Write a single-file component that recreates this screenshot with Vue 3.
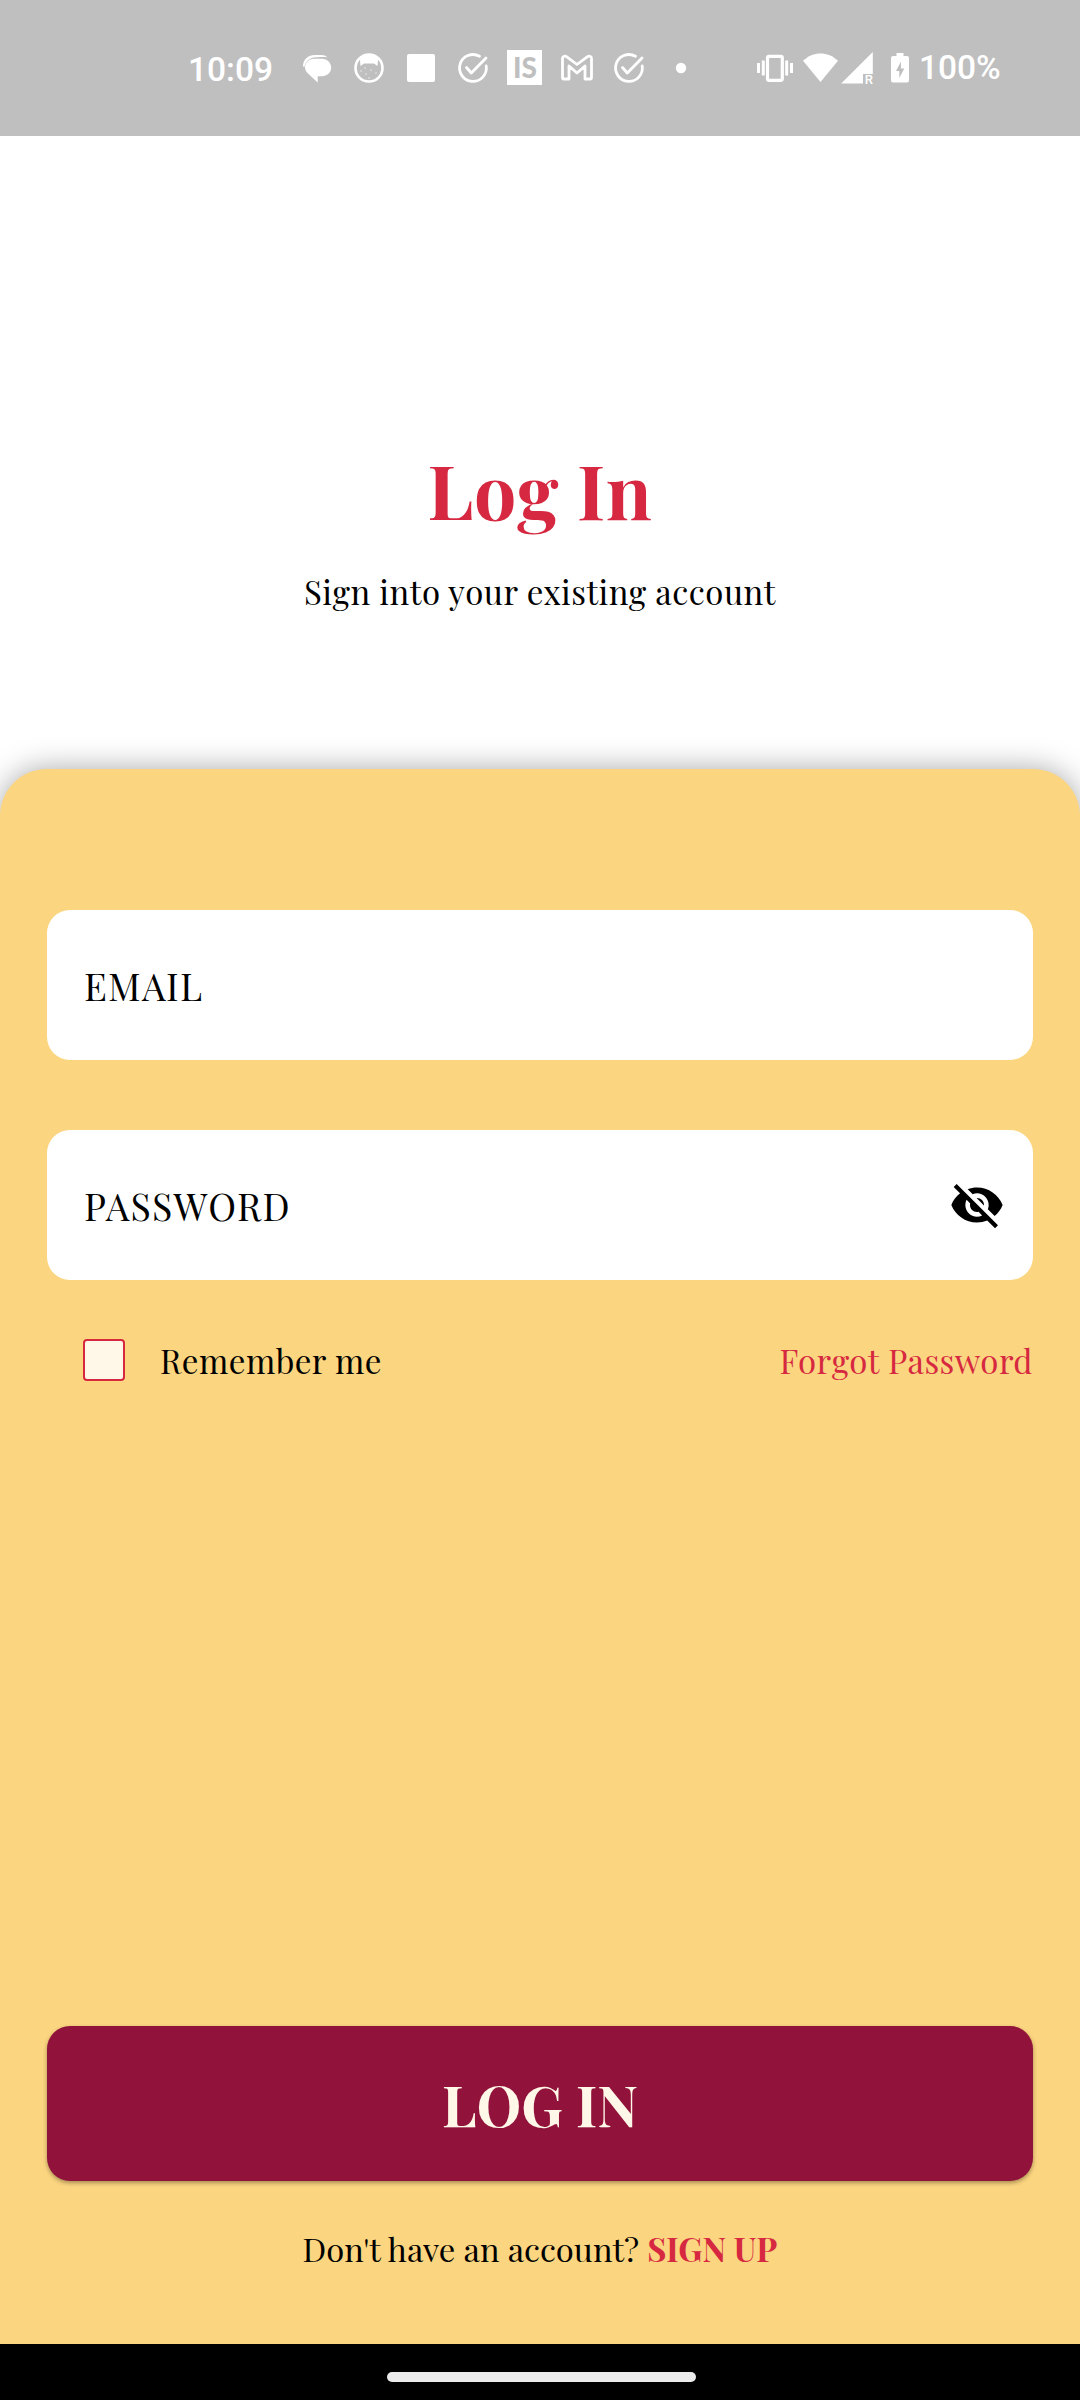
<script setup>
import { ref } from 'vue'

const checks = [473, 629]
const fields = [
  { id: 'email', label: 'EMAIL', secret: false },
  { id: 'password', label: 'PASSWORD', secret: true },
]
const remember = ref(false)
</script>

<template>
  <div class="screen">
    <header class="status">
      <span class="time">10:09</span>
      <svg class="notifications" width="390" height="50" viewBox="300 43 390 50">
        <g fill="#fff">
          <path d="M303 66.500c0-7 5-11.500 12-11.500h6c3 0 5 .8 6.500 2.500C325 56.700 322 57 316 57.200c-6 .5-10.500 3.500-11.600 9.800z" />
          <path d="M314 58.700h8c5 0 9.200 4 9.200 8.800 0 4.900-4.200 8.700-9.200 8.700h-4.300v6.300l-9.200-8.500c-2.100-1.800-3.500-4-3.500-6.500 0-4.900 4-8.800 9-8.800z" />
          <rect x="407" y="54" width="28" height="28" rx="2" />
          <rect x="507" y="50" width="35" height="35" />
          <circle cx="681" cy="68" r="5.200" />
        </g>
        <circle cx="369" cy="68" r="13.500" fill="none" stroke="#fff" stroke-width="2.600" />
        <path d="M360 60c1-4 5-5.500 9-5.500s8 1.500 9 5.500l-.5 6-3.500-2.500h-10l-3.500 2.500z" fill="#fff" />
        <g fill="#fff" opacity=".4">
          <circle cx="361" cy="71" r="1" /><circle cx="366" cy="74" r="1" />
          <circle cx="371" cy="70" r="1" /><circle cx="376" cy="73" r="1" />
          <circle cx="369" cy="78" r="1" /><circle cx="365" cy="68" r="1" />
        </g>
        <g v-for="x in checks" :key="x" :transform="`translate(${x} 68)`" fill="none" stroke="#fff" stroke-width="2.800" stroke-linecap="round" stroke-linejoin="round">
          <path d="M6.500-11.700A13.400 13.400 0 1 0 13.200-2" />
          <path d="M-6.500-.5l4.800 5.500L13-10" />
        </g>
        <text x="513" y="78" class="is" fill="#bfbfbf">IS</text>
        <path d="M562.500 57.500v20q0 1.500 1.500 1.500h5v-13l8 7 8-7v13h5q1.500 0 1.500-1.500v-19c0-2.500-2.500-3-4-1.800L577 64.500l-10.500-7.800c-1.500-1.200-4-.5-4 2" fill="none" stroke="#fff" stroke-width="2.800" stroke-linejoin="round" />
      </svg>
      <svg class="system" width="162" height="50" viewBox="750 43 162 50">
        <g fill="#fff">
          <path d="M757 63h3v10h-3zM761.800 60.500h3v15h-3zM785.200 60.500h3v15h-3zM790 63h3v10h-3z" />
          <path d="M803 60.800C813 51 828 51 838 60.800L820.500 82z" />
          <path d="M872.800 52v22H863v9.500h-21.800z" />
          <path d="M896.500 53h7v3h3.500q2 0 2 2v22.500q0 2-2 2h-14q-2 0-2-2V58q0-2 2-2h3.500z" />
        </g>
        <rect x="767.500" y="56.300" width="14.800" height="24" rx="1.500" fill="none" stroke="#fff" stroke-width="3.200" />
        <path d="M901 61.500l-5 9.500h3.300v7l5-9.500H901z" fill="#bfbfbf" />
        <text x="864.800" y="83.500" class="roaming" fill="#fff">R</text>
      </svg>
      <span class="battery">100%</span>
    </header>

    <section class="hero">
      <h1>Log In</h1>
      <p>Sign into your existing account</p>
    </section>

    <main class="card">
      <div v-for="f in fields" :key="f.id" class="field">
        <span class="label">{{ f.label }}</span>
        <svg v-if="f.secret" width="56" height="56" viewBox="0 0 24 24">
          <path d="M12 7c2.760 0 5 2.240 5 5 0 .65-.13 1.260-.36 1.830l2.920 2.920c1.510-1.260 2.700-2.890 3.430-4.750-1.730-4.390-6-7.500-11-7.500-1.400 0-2.740.25-3.980.7l2.160 2.160C10.740 7.130 11.350 7 12 7zM2 4.270l2.280 2.280.46.460C3.080 8.300 1.780 10.020 1 12c1.730 4.390 6 7.500 11 7.500 1.550 0 3.030-.3 4.380-.84l.42.42L19.730 22 21 20.730 3.270 3 2 4.270zM7.530 9.800l1.550 1.550c-.05.21-.08.43-.08.65 0 1.660 1.340 3 3 3 .22 0 .44-.03.65-.08l1.550 1.550c-.67.33-1.410.53-2.200.53-2.760 0-5-2.240-5-5 0-.79.2-1.530.53-2.200zm4.310-.78l3.150 3.150.02-.16c0-1.660-1.340-3-3-3l-.17.01z" />
        </svg>
      </div>

      <div class="options">
        <span class="box" role="checkbox" :aria-checked="remember" @click="remember = !remember"></span>
        <span class="remember">Remember me</span>
        <a class="forgot">Forgot Password</a>
      </div>

      <button class="login" type="button">LOG IN</button>

      <p class="signup"><span>Don't have an account?</span><a>SIGN UP</a></p>
    </main>

    <footer class="nav"><span class="handle"></span></footer>
  </div>
</template>

<style>
body {
  background: #fff;
}
</style>

<style scoped>
.screen {
  width: 1080px;
  height: 2400px;
  display: flex;
  flex-direction: column;
  overflow: hidden;
  background: #fff;
  color: #000;
  font-family: "Playfair Display", "Liberation Serif", serif;
  white-space: nowrap;
}
.status {
  height: 136px;
  flex: none;
  box-sizing: border-box;
  padding-left: 188px;
  display: flex;
  align-items: center;
  background: #bfbfbf;
  color: #fff;
  font: 500 33.500px/40px Roboto, sans-serif;
}
.time {
  width: 112px;
  padding-top: 3px;
}
.notifications {
  margin-right: 60px;
}
.battery {
  padding-left: 7px;
  padding-bottom: 1px;
}
.is {
  font: 900 28px Lato, sans-serif;
}
.roaming {
  font: 500 13px Roboto, sans-serif;
}
.hero {
  height: 633px;
  flex: none;
  box-sizing: border-box;
  padding-top: 299px;
  text-align: center;
}
h1 {
  margin: 0;
  color: #d62941;
  font-size: 75px;
  line-height: 108px;
  font-weight: 700;
  letter-spacing: 0.600px;
}
.hero p {
  margin: 23px 0 0;
  font-size: 33px;
  line-height: 50px;
  letter-spacing: 0.500px;
}
.card {
  height: 1575px;
  flex: none;
  box-sizing: border-box;
  padding: 140.500px 47px 0;
  display: flex;
  flex-direction: column;
  border-radius: 47px 47px 0 0;
  background: #fbd57f;
  box-shadow: 0 0 30px rgba(0, 0, 0, 0.34);
}
.field {
  height: 150px;
  flex: none;
  box-sizing: border-box;
  margin-bottom: 70px;
  padding: 0 28px 0 37px;
  display: flex;
  align-items: center;
  justify-content: space-between;
  border-radius: 23px;
  background: #fff;
}
.label {
  padding-top: 1px;
  font-size: 37.500px;
  letter-spacing: 1.250px;
}
.options {
  height: 50px;
  margin-top: -15px;
  padding-left: 35.500px;
  display: flex;
  align-items: center;
  font-size: 33px;
  line-height: 50px;
}
.box {
  width: 42px;
  height: 42px;
  box-sizing: border-box;
  border: 2.500px solid #d62941;
  border-radius: 4px;
  background: #fff7e7;
}
.remember {
  margin-left: 35.500px;
  padding-top: 1px;
  letter-spacing: 0.450px;
}
.forgot {
  margin-left: auto;
  padding-top: 1px;
  color: #d62941;
  letter-spacing: 0.450px;
}
.login {
  height: 155px;
  margin: 641px 0 0;
  padding: 0;
  border: 0;
  border-radius: 23px;
  background: #91133c;
  color: #fff7e7;
  box-shadow: 0 2px 4px rgba(0, 0, 0, 0.34);
  font-family: inherit;
  font-size: 56.500px;
  font-weight: 700;
}
.signup {
  margin: 43px 0 0;
  display: flex;
  justify-content: center;
  font-size: 32.800px;
  line-height: 50px;
}
.signup a {
  margin-left: 8px;
  color: #d62941;
  font-weight: 700;
}
.nav {
  height: 56px;
  flex: none;
  display: flex;
  justify-content: center;
  background: #000;
}
.handle {
  width: 309px;
  height: 10px;
  margin: 28px 0 0 3px;
  border-radius: 5px;
  background: #ebebeb;
}
</style>
